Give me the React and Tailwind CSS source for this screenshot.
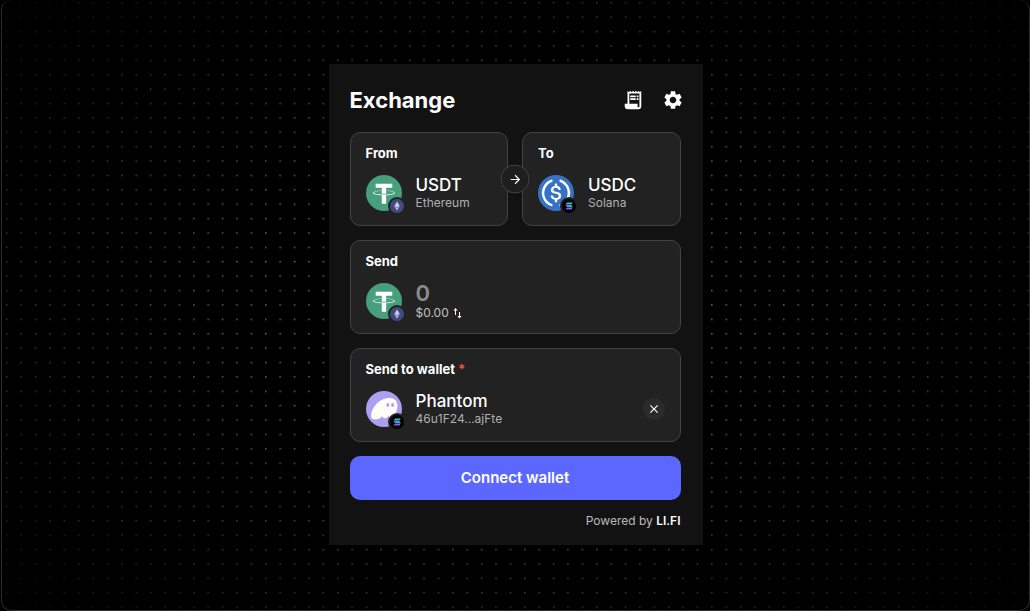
import React, { useState } from "react";
import {
  MdArrowForward,
  MdClose,
  MdReceiptLong,
  MdSettings,
} from "react-icons/md";

const TetherLogo = () => (
  <svg viewBox="0 0 32 32" className="size-9" aria-hidden="true">
    <circle cx="16" cy="16" r="16" fill="#479f7c" />
    <path
      fill="#fff"
      d="M17.922 17.383v-.002c-.11.008-.677.042-1.942.042-1.01 0-1.721-.03-1.971-.042v.003c-3.888-.171-6.79-.848-6.79-1.658 0-.809 2.902-1.486 6.79-1.66v2.644c.254.018.982.061 1.988.061 1.207 0 1.812-.05 1.925-.06v-2.643c3.88.173 6.775.85 6.775 1.658 0 .81-2.895 1.485-6.775 1.657m0-3.59v-2.366h5.414V7.819H8.595v3.608h5.414v2.365c-4.4.202-7.709 1.074-7.709 2.118 0 1.044 3.309 1.915 7.709 2.118v7.582h3.913v-7.584c4.393-.202 7.694-1.073 7.694-2.116 0-1.043-3.301-1.914-7.694-2.117"
    />
  </svg>
);

const UsdcLogo = () => (
  <svg viewBox="2 2 28 28" className="size-9" aria-hidden="true">
    <circle cx="16" cy="16" r="14" fill="#3673c5" />
    <path
      fill="#fff"
      d="M20.022 18.124c0-2.124-1.28-2.852-3.84-3.156-1.828-.243-2.193-.728-2.193-1.578 0-.85.61-1.396 1.828-1.396 1.097 0 1.707.364 2.011 1.275a.458.458 0 00.427.303h.975a.416.416 0 00.427-.425v-.06a3.04 3.04 0 00-2.743-2.489V9.142c0-.243-.183-.425-.487-.486h-.915c-.243 0-.426.182-.487.486v1.396c-1.829.242-2.986 1.456-2.986 2.974 0 2.002 1.218 2.791 3.778 3.095 1.707.303 2.255.668 2.255 1.639 0 .97-.853 1.638-2.011 1.638-1.585 0-2.133-.667-2.316-1.578-.06-.242-.244-.364-.427-.364h-1.036a.416.416 0 00-.426.425v.06c.243 1.518 1.219 2.61 3.23 2.914v1.457c0 .242.183.425.487.485h.915c.243 0 .426-.182.487-.485V21.34c1.829-.303 3.047-1.578 3.047-3.217z"
    />
    <path
      fill="#fff"
      d="M12.892 24.497c-4.754-1.7-7.192-6.98-5.424-11.653.914-2.55 2.925-4.491 5.424-5.402.244-.121.365-.303.365-.607v-.85c0-.242-.121-.424-.365-.485-.061 0-.183 0-.244.06a10.895 10.895 0 00-7.13 13.717c1.096 3.4 3.717 6.01 7.13 7.102.244.121.488 0 .548-.243.061-.06.061-.122.061-.243v-.85c0-.182-.182-.424-.365-.546zm6.46-18.936c-.244-.122-.488 0-.548.242-.061.061-.061.122-.061.243v.85c0 .243.182.485.365.607 4.754 1.7 7.192 6.98 5.424 11.653-.914 2.55-2.925 4.491-5.424 5.402-.244.121-.365.303-.365.607v.85c0 .242.121.424.365.485.061 0 .183 0 .244-.06a10.895 10.895 0 007.13-13.717c-1.096-3.46-3.778-6.07-7.13-7.162z"
    />
  </svg>
);

const PhantomLogo = () => (
  <svg viewBox="0 0 36 36" className="size-9" aria-hidden="true">
    <circle cx="18" cy="18" r="18" fill="#ab9ff2" />
    <path
      fill="#fffdf8"
      d="M5 25.5C5 17.5 12.5 7 23.5 7 28.5 7 31.4 10 31.4 14.5c0 6.5-3.4 12-6.4 12-1.4 0-2-.8-2.1-2-.9 1.5-2.4 2.7-4 2.7-1.5 0-2.3-.9-2.4-2.3C14.8 27 12.2 28.5 9.5 28.5 6.5 28.5 5 27.3 5 25.5z"
    />
    <ellipse cx="21.8" cy="14" rx="1.5" ry="1.9" fill="#ab9ff2" />
    <ellipse cx="26.6" cy="14" rx="1.5" ry="1.9" fill="#ab9ff2" />
  </svg>
);

const EthereumBadge = () => (
  <svg viewBox="0 0 14 14" className="size-full" aria-hidden="true">
    <circle cx="7" cy="7" r="7" fill="#454a7d" />
    <path d="M7 2.6 4.3 7 7 8.3z" fill="#8fd4f2" />
    <path d="M7 2.6 9.7 7 7 8.3z" fill="#f5d3c6" />
    <path d="M4.3 7 7 5.9 9.7 7 7 8.6z" fill="#c4baf5" />
    <path d="M4.5 7.6 7 9v2.5z" fill="#d6c0fa" />
    <path d="M9.5 7.6 7 9v2.5z" fill="#9fc2fa" />
  </svg>
);

const SolanaBadge = () => (
  <svg viewBox="0 0 14 14" className="size-full" aria-hidden="true">
    <defs>
      <linearGradient id="sol" gradientUnits="userSpaceOnUse" x1="9.5" y1="3.5" x2="5" y2="10.5">
        <stop offset="0" stopColor="#19e6a0" />
        <stop offset="0.5" stopColor="#5a90dc" />
        <stop offset="1" stopColor="#9a45ff" />
      </linearGradient>
    </defs>
    <circle cx="7" cy="7" r="7" fill="#000" />
    <path
      fill="url(#sol)"
      d="M4.9 3.6h5.9l-1.4 1.8H3.5zM3.5 6.1h5.9l1.4 1.8H4.9zM4.9 8.6h5.9l-1.4 1.8H3.5z"
    />
  </svg>
);

const FlipIcon = () => (
  <svg viewBox="0 0 10 12" className="h-3 w-2.5 fill-white" aria-hidden="true">
    <path d="M2.5 1 .4 3.600h1.600V8h1V3.600h1.600zM6.500 11.500l2.100-2.600H7V5H6v3.900H4.400z" />
  </svg>
);

const DotGrid = () => (
  <svg className="absolute inset-0 size-full" aria-hidden="true">
    <defs>
      <pattern id="dots" x="4" y="2" width="14.39" height="14.39" patternUnits="userSpaceOnUse">
        <rect width="1.5" height="1.5" fill="#7a7a7a" />
      </pattern>
      <radialGradient id="fade" cx="0.5" cy="0.5" r="0.7">
        <stop offset="0" stopColor="#fff" />
        <stop offset="0.4" stopColor="#ccc" />
        <stop offset="1" stopColor="#1c1c1c" />
      </radialGradient>
      <mask id="dots-mask">
        <rect width="100%" height="100%" fill="url(#fade)" />
      </mask>
    </defs>
    <rect width="100%" height="100%" fill="url(#dots)" mask="url(#dots-mask)" />
  </svg>
);

const Avatar = ({ logo, badge }) => (
  <span className="relative block size-9 shrink-0">
    {logo}
    <span className="absolute -right-1 -bottom-1 block size-[18px] rounded-full border-2 border-[#222222] bg-[#222222]">
      {badge}
    </span>
  </span>
);

const cardClass =
  "rounded-[10px] border border-[#424242] bg-[#222222] px-[15px] pt-3 pb-3.5 text-left";
const labelClass = "block text-[13px] leading-4 font-bold";

const TokenCard = ({ label, name, chain, logo, badge }) => (
  <button type="button" className={`${cardClass} min-w-0 flex-1`}>
    <span className={labelClass}>{label}</span>
    <span className="mt-3.5 flex h-9 items-center gap-3.5">
      <Avatar logo={logo} badge={badge} />
      <span className="block">
        <span className="block text-[17px] leading-5 font-medium">{name}</span>
        <span className="block text-xs leading-4 text-[#b0b0b0]">{chain}</span>
      </span>
    </span>
  </button>
);

const App = () => {
  const [amount, setAmount] = useState("");

  return (
    <div className="flex min-h-screen bg-black pl-px font-['Inter',sans-serif] text-white">
      <div className="relative flex flex-1 items-center justify-center overflow-hidden rounded-[10px] border border-t-0 border-[#2b2b2b] pb-px">
        <DotGrid />

        <main className="relative w-full max-w-[374px] bg-[#121212] pt-5 pr-[22px] pb-[17px] pl-[21px]">
          <header className="flex h-8 items-center justify-between">
            <h1 className="text-[22px] leading-8 font-bold">Exchange</h1>
            <div className="-mr-[3px] flex gap-[18px]">
              <button type="button" aria-label="Transaction history">
                <MdReceiptLong className="size-[22px]" />
              </button>
              <button type="button" aria-label="Settings">
                <MdSettings className="size-[22px]" />
              </button>
            </div>
          </header>

          <div className="mt-4 flex flex-col gap-3.5">
            <div className="relative flex gap-3.5">
              <TokenCard
                label="From"
                name="USDT"
                chain="Ethereum"
                logo={<TetherLogo />}
                badge={<EthereumBadge />}
              />
              <TokenCard
                label="To"
                name="USDC"
                chain="Solana"
                logo={<UsdcLogo />}
                badge={<SolanaBadge />}
              />
              <button
                type="button"
                aria-label="Swap tokens"
                className="absolute top-1/2 left-1/2 flex size-[29px] -translate-x-1/2 -translate-y-1/2 items-center justify-center rounded-full border border-[#424242] bg-[#1e1e1e]"
              >
                <MdArrowForward className="size-3.5" />
              </button>
            </div>

            <section className={cardClass}>
              <label htmlFor="amount" className={labelClass}>
                Send
              </label>
              <div className="mt-3.5 flex h-9 items-center gap-3.5">
                <Avatar logo={<TetherLogo />} badge={<EthereumBadge />} />
                <div className="min-w-0 flex-1">
                  <input
                    id="amount"
                    inputMode="decimal"
                    placeholder="0"
                    value={amount}
                    onChange={(e) => setAmount(e.target.value)}
                    className="block h-6 w-full bg-transparent text-[22px] leading-6 font-semibold placeholder:text-[#8c8c8c] focus:outline-none"
                  />
                  <button type="button" className="flex items-center gap-1 text-xs leading-4 text-[#c0c0c0]">
                    $0.00
                    <FlipIcon />
                  </button>
                </div>
              </div>
            </section>

            <section className={cardClass}>
              <h2 className={labelClass}>
                Send to wallet <span className="text-[#e5533d]">*</span>
              </h2>
              <div className="mt-3.5 flex h-9 items-center gap-3.5">
                <Avatar logo={<PhantomLogo />} badge={<SolanaBadge />} />
                <div className="flex-1">
                  <p className="text-[17px] leading-5 font-medium">Phantom</p>
                  <p className="text-xs leading-4 text-[#b0b0b0]">46u1F24...ajFte</p>
                </div>
                <button
                  type="button"
                  aria-label="Remove wallet"
                  className="flex size-[22px] items-center justify-center rounded-full bg-[#2b2b2b]"
                >
                  <MdClose className="size-3.5" />
                </button>
              </div>
            </section>

            <button
              type="button"
              className="h-11 rounded-[10px] bg-[#5c67ff] text-[15px] font-semibold"
            >
              Connect wallet
            </button>
          </div>

          <p className="mt-3.5 text-right text-xs leading-3.5 text-[#bbbbbb]">
            Powered by{" "}
            <a href="#lifi" className="font-semibold text-white">LI.FI</a>
          </p>
        </main>
      </div>
    </div>
  );
};

export default App;
